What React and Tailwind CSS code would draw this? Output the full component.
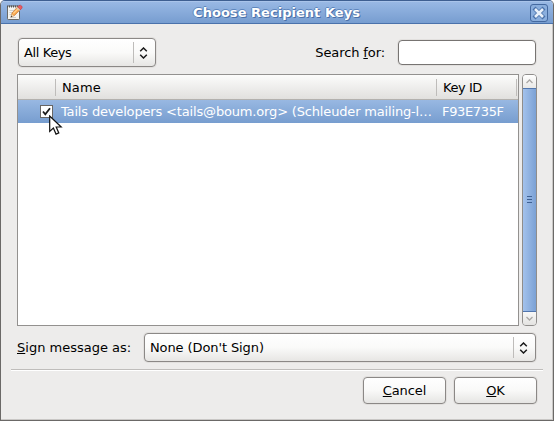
import React from "react";

function NoteIcon() {
  return (
    <svg width="17" height="17" viewBox="0 0 17 17" className="block">
      <rect x="1.5" y="2" width="12" height="13.5" rx="0.8" fill="#f4f4f0" stroke="#6a6a66" />
      <path d="M1 2.500h13" stroke="#555" strokeWidth="2" strokeDasharray="1 1" />
      <path d="M3.500 6.500h6M3.500 8.500h4M3.500 10.500h3M4 13.500h6" stroke="#cfcfcb" />
      <path d="M5 13l1-4 6-6.500 2.800 2.500-6.300 6.500z" fill="#f8a548" stroke="#c0783a" strokeWidth="0.700" />
      <path d="M7.300 9.500l5-5" stroke="#ffd08a" strokeWidth="1.200" />
      <path d="M5 13l0.800-3 2 2z" fill="#ecd9b5" />
      <path d="M4.800 13.200l.4-1.600 1.100 1.100z" fill="#333" />
      <path d="M11.700 2.900l1.300-1.400q1.500-.8 2.700.5 1 1.200 0 2.500l-1.300 1.200z" fill="#e85c62" stroke="#c33c46" strokeWidth="0.600" />
      <path d="M11 3.700l2.700 2.700" stroke="#d3cdc4" strokeWidth="1.200" />
    </svg>
  );
}

function CloseButton() {
  return (
    <svg width="19" height="19" viewBox="0 0 19 19" className="block">
      <rect x="1.500" y="1.500" width="17" height="17" rx="2.500" fill="#8aaedd" stroke="#44699f" />
      <path d="M6.500 6.500l7 7M13.500 6.500l-7 7" stroke="#4a72ab" strokeWidth="4.200" strokeLinecap="square" />
      <path d="M6 6l8 8M14 6l-8 8" stroke="#e8f0fa" strokeWidth="2.600" />
    </svg>
  );
}

function Arrows() {
  return (
    <svg width="9" height="12" viewBox="0 0 9 12" className="block" fill="none" stroke="#1a1a1a" strokeWidth="1.500">
      <path d="M1.200 4.200L4.500 1l3.300 3.200M1.200 7.800L4.500 11l3.300-3.200" />
    </svg>
  );
}

function Combo({ className, children }) {
  return (
    <div className={"flex items-center rounded-[4px] border border-[#8b8886] bg-linear-to-b from-white via-[#fafaf9] to-[#e7e6e4] shadow-[0_0_0_1px_#e2e0de] " + className}>
      <span className="flex-1 pl-[5px]">{children}</span>
      <span className="h-[21px] w-px bg-[#bebcba]" />
      <span className="flex w-[21px] justify-center pr-[3px]">
        <Arrows />
      </span>
    </div>
  );
}

function Button({ children }) {
  return (
    <button className="h-[27px] w-[83px] rounded-[4px] border border-[#8b8886] bg-linear-to-b from-white via-[#f9f9f8] to-[#e6e5e3] text-center shadow-[0_0_0_1px_#e2e0de]">
      {children}
    </button>
  );
}

function Key({ children }) {
  return <span className="underline decoration-1 underline-offset-1">{children}</span>;
}

function Scrollbar() {
  return (
    <div className="flex h-[252px] w-[15px] flex-col overflow-hidden rounded-[4px] border border-[#8f8d8b]">
      <div className="flex h-[13px] items-center justify-center bg-linear-to-b from-white to-[#e9e8e6]">
        <svg width="7" height="5" viewBox="0 0 7 5" fill="none" stroke="#aaa8a6" strokeWidth="1.300">
          <path d="M.5 4l3-3 3 3" />
        </svg>
      </div>
      <div className="-mx-px flex flex-1 flex-col items-center justify-center gap-[2px] border border-[#5176ae] bg-linear-to-r from-[#a3c2ec] to-[#7ba1d5] pb-[2px]">
        <span className="h-px w-[5px] bg-[#3f6193]" />
        <span className="h-px w-[5px] bg-[#3f6193]" />
        <span className="h-px w-[5px] bg-[#3f6193]" />
      </div>
      <div className="flex h-[13px] items-center justify-center bg-linear-to-b from-[#f8f8f7] to-[#e4e3e1]">
        <svg width="7" height="5" viewBox="0 0 7 5" fill="none" stroke="#aaa8a6" strokeWidth="1.300">
          <path d="M.5 1l3 3 3-3" />
        </svg>
      </div>
    </div>
  );
}

export default function App() {
  return (
    <div className="relative h-[421px] w-[554px] overflow-hidden bg-white font-['DejaVu_Sans',sans-serif] text-[13px] leading-[16px] tracking-[-0.1px] text-black">
      <div className="flex h-[421px] w-[554px] flex-col overflow-hidden rounded-t-[5px] border border-[#6b6967] border-t-[#3e5f91] bg-[#edeceb]">
        <header className="flex h-[23px] shrink-0 items-center border-t border-b border-t-[#a9c4ea] border-b-[#4a72ab] bg-linear-to-b from-[#98b8e4] to-[#779dd0] pr-[5px] pl-[5px]">
          <NoteIcon />
          <h1 className="flex-1 pl-px text-center font-bold tracking-[0.03px] text-white [text-shadow:1px_1px_0_#4a70a8,-1px_0_0_#5e86bd,0_-1px_0_#5e86bd]">
            Choose Recipient Keys
          </h1>
          <CloseButton />
        </header>

        <main className="flex flex-1 flex-col border-r border-b border-[#c9c7c5] pl-[16px]">
          <div className="mt-[14px] flex h-[29px] w-[519px] items-center pl-px">
            <Combo className="h-[29px] w-[138px] tracking-[-0.4px]">All Keys</Combo>
            <label className="ml-auto pr-[13px]">
              Search <Key>f</Key>or:
            </label>
            <div className="h-[25px] w-[138px] rounded-[4px] border border-[#777472] bg-white shadow-[0_0_0_1px_#e2e0de]" />
          </div>

          <div className="mt-[7px] flex gap-[3px]">
            <div className="h-[252px] w-[502px] border border-[#93918f] bg-white">
              <div className="flex h-[25px] items-center border-b border-[#b3b1ae] bg-linear-to-b from-[#fcfcfb] to-[#e1e0de]">
                <span className="h-[17px] w-[38px] border-r border-[#bebcba]" />
                <span className="h-[17px] w-[381px] border-r border-[#bebcba] pl-[6px] leading-[18px] tracking-[0.1px]">Name</span>
                <span className="h-[17px] w-[80px] border-r border-[#bebcba] pl-[6px] leading-[18px] tracking-[-0.45px]">Key ID</span>
              </div>
              <div className="flex h-[23px] items-center bg-linear-to-b from-[#98b8e2] to-[#779dcf] text-white">
                <span className="ml-[22px] flex size-[13px] items-center justify-center border border-[#686664] bg-white">
                  <svg width="11" height="11" viewBox="0 0 11 11" fill="none" stroke="#1b1b1b" strokeWidth="1.800">
                    <path d="M2 5.500l2.300 2.800L9 2.200" />
                  </svg>
                </span>
                <span className="w-[381px] pl-[8px] tracking-[-0.165px] whitespace-nowrap">
                  Tails developers &lt;tails@boum.org&gt; (Schleuder mailing-l…
                </span>
                <span className="pl-[8px] tracking-[-0.35px]">F93E735F</span>
              </div>
            </div>
            <Scrollbar />
          </div>

          <div className="mt-[7px] flex h-[29px] items-center">
            <label className="w-[127px] tracking-normal whitespace-nowrap">
              <Key>S</Key>ign message as:
            </label>
            <Combo className="h-[29px] w-[392px]">None (Don't Sign)</Combo>
          </div>

          <div className="mt-[7px] -ml-[6px] h-[2px] w-[532px] border-t border-b border-t-[#bfbdbb] border-b-white" />

          <div className="mt-[6px] flex w-[520px] justify-end gap-[8px]">
            <Button>
              <Key>C</Key>ancel
            </Button>
            <Button>
              <Key>O</Key>K
            </Button>
          </div>
        </main>
      </div>

      <svg className="absolute top-[115px] left-[49px]" width="14" height="21" viewBox="0 0 14 21">
        <path d="M.7 1v15.500l3.700-3.400 2.600 6 2.800-1.200-2.600-5.900h5z" fill="#fff" stroke="#111" strokeWidth="1.200" />
      </svg>
    </div>
  );
}
